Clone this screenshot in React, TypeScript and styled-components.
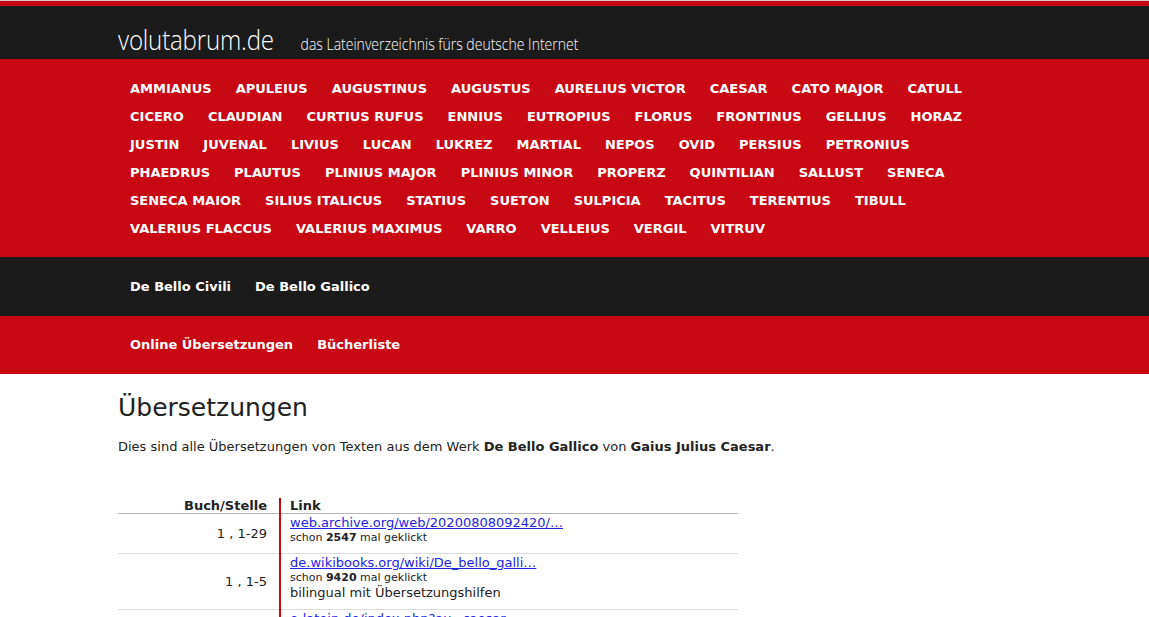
import styled, { createGlobalStyle } from 'styled-components';

const GlobalStyle = createGlobalStyle`
    html, body {
        margin: 0;
        padding: 0;
        background: #fff;
    }
    body {
        font-family: 'DejaVu Sans', Verdana, sans-serif;
        color: #222;
        border-top: 1px solid #cfcfcf;
    }
`;

const RED = '#c80813';
const DARK = '#1b1b1b';

const Page = styled.div`
    border-top: 5px solid ${RED};
`;

const Band = styled.div<{ $bg: string; $pad: string }>`
    background: ${(p) => p.$bg};
    padding: ${(p) => p.$pad};
`;

const Wrap = styled.div`
    width: 913px;
    margin: 0 auto;
`;

// the logo font is a narrow one; squeeze Open Sans Light to match
const Brand = styled.div`
    display: flex;
    align-items: baseline;
    height: 53px;
    color: #fff;
    font-family: 'Open Sans', sans-serif;
    font-weight: 300;
    transform: scaleX(0.86);
    transform-origin: left center;
`;

const Logo = styled.span`
    font-size: 28px;
    line-height: 66px;
    letter-spacing: -0.2px;
`;

const Slogan = styled.span`
    font-size: 16.3px;
    margin-left: 31px;
`;

const NavList = styled.ul`
    list-style: none;
    margin: 0;
    padding: 0;
    width: 890px;
    display: flex;
    flex-wrap: wrap;
`;

const NavItem = styled.li<{ $upper?: boolean }>`
    padding: 0 12px;
    line-height: 28px;
    font-size: 13px;
    font-weight: bold;
    color: #fff;
    white-space: nowrap;
    text-transform: ${(p) => (p.$upper ? 'uppercase' : 'none')};
`;

const Main = styled.div`
    width: 913px;
    margin: 0 auto;
    padding-top: 17px;
`;

const Title = styled.h1`
    font-size: 25px;
    font-weight: normal;
    margin: 0 0 12px;
    line-height: 34px;
    color: #222;
`;

const Lead = styled.p`
    font-size: 13px;
    margin: 0 0 41px;
    line-height: 20px;
`;

const Table = styled.table`
    width: 620px;
    border-collapse: collapse;
    font-size: 13px;
`;

const Th = styled.th<{ $first?: boolean }>`
    text-align: ${(p) => (p.$first ? 'right' : 'left')};
    padding: 0 ${(p) => (p.$first ? '12px 0 0' : '10px 0 9px')};
    width: ${(p) => (p.$first ? '149px' : 'auto')};
    border-right: ${(p) => (p.$first ? `2px solid ${RED}` : 'none')};
    border-bottom: 1px solid #b5b5b5;
    line-height: 15px;
    font-weight: bold;
`;

const Td = styled.td<{ $first?: boolean }>`
    text-align: ${(p) => (p.$first ? 'right' : 'left')};
    vertical-align: middle;
    padding: ${(p) => (p.$first ? '1px 12px 8px 0' : '1px 10px 8px 9px')};
    border-right: ${(p) => (p.$first ? `2px solid ${RED}` : 'none')};
    border-bottom: 1px solid #dcdcdc;
`;

const Link = styled.a`
    color: #2323e6;
    text-decoration: underline;
    font-size: 13px;
    line-height: 16px;
    display: block;
`;

const Clicks = styled.div`
    font-size: 11px;
    line-height: 14px;
`;

const Note = styled.div`
    font-size: 13px;
    line-height: 16px;
`;

const Place = styled.span`
    display: block;
    line-height: 16px;
    margin-top: 8px;
`;

const authors = [
    'Ammianus', 'Apuleius', 'Augustinus', 'Augustus', 'Aurelius Victor', 'Caesar', 'Cato Major', 'Catull',
    'Cicero', 'Claudian', 'Curtius Rufus', 'Ennius', 'Eutropius', 'Florus', 'Frontinus', 'Gellius', 'Horaz',
    'Justin', 'Juvenal', 'Livius', 'Lucan', 'Lukrez', 'Martial', 'Nepos', 'Ovid', 'Persius', 'Petronius',
    'Phaedrus', 'Plautus', 'Plinius Major', 'Plinius Minor', 'Properz', 'Quintilian', 'Sallust', 'Seneca',
    'Seneca Maior', 'Silius Italicus', 'Statius', 'Sueton', 'Sulpicia', 'Tacitus', 'Terentius', 'Tibull',
    'Valerius Flaccus', 'Valerius Maximus', 'Varro', 'Velleius', 'Vergil', 'Vitruv',
];

const rows = [
    { stelle: '1 , 1-29', url: 'web.archive.org/web/20200808092420/…', clicks: '2547' },
    { stelle: '1 , 1-5', url: 'de.wikibooks.org/wiki/De_bello_galli…', clicks: '9420', note: 'bilingual mit Übersetzungshilfen' },
    { stelle: '1 , 1-54', url: 'e-latein.de/index.php?au=caesar…', clicks: '3310' },
];

export default function App() {
    return (
        <Page>
            <GlobalStyle />
            <Band $bg={DARK} $pad="0">
                <Wrap>
                    <Brand>
                        <Logo>volutabrum.de</Logo>
                        <Slogan>das Lateinverzeichnis fürs deutsche Internet</Slogan>
                    </Brand>
                </Wrap>
            </Band>
            <Band $bg={RED} $pad="16px 0 14px">
                <Wrap>
                    <NavList>
                        {authors.map((a) => (
                            <NavItem key={a} $upper>
                                {a}
                            </NavItem>
                        ))}
                    </NavList>
                </Wrap>
            </Band>
            <Band $bg={DARK} $pad="16px 0 15px">
                <Wrap>
                    <NavList>
                        <NavItem>De Bello Civili</NavItem>
                        <NavItem>De Bello Gallico</NavItem>
                    </NavList>
                </Wrap>
            </Band>
            <Band $bg={RED} $pad="15px 0 15px">
                <Wrap>
                    <NavList>
                        <NavItem>Online Übersetzungen</NavItem>
                        <NavItem>Bücherliste</NavItem>
                    </NavList>
                </Wrap>
            </Band>
            <Main>
                <Title>Übersetzungen</Title>
                <Lead>
                    Dies sind alle Übersetzungen von Texten aus dem Werk <b>De Bello Gallico</b> von{' '}
                    <b>Gaius Julius Caesar</b>.
                </Lead>
                <Table>
                    <thead>
                        <tr>
                            <Th $first>Buch/Stelle</Th>
                            <Th>Link</Th>
                        </tr>
                    </thead>
                    <tbody>
                        {rows.map((r) => (
                            <tr key={r.url}>
                                <Td $first>
                                    <Place>{r.stelle}</Place>
                                </Td>
                                <Td>
                                    <Link href="#">{r.url}</Link>
                                    <Clicks>
                                        schon <b>{r.clicks}</b> mal geklickt
                                    </Clicks>
                                    {r.note && <Note>{r.note}</Note>}
                                </Td>
                            </tr>
                        ))}
                    </tbody>
                </Table>
            </Main>
        </Page>
    );
}
